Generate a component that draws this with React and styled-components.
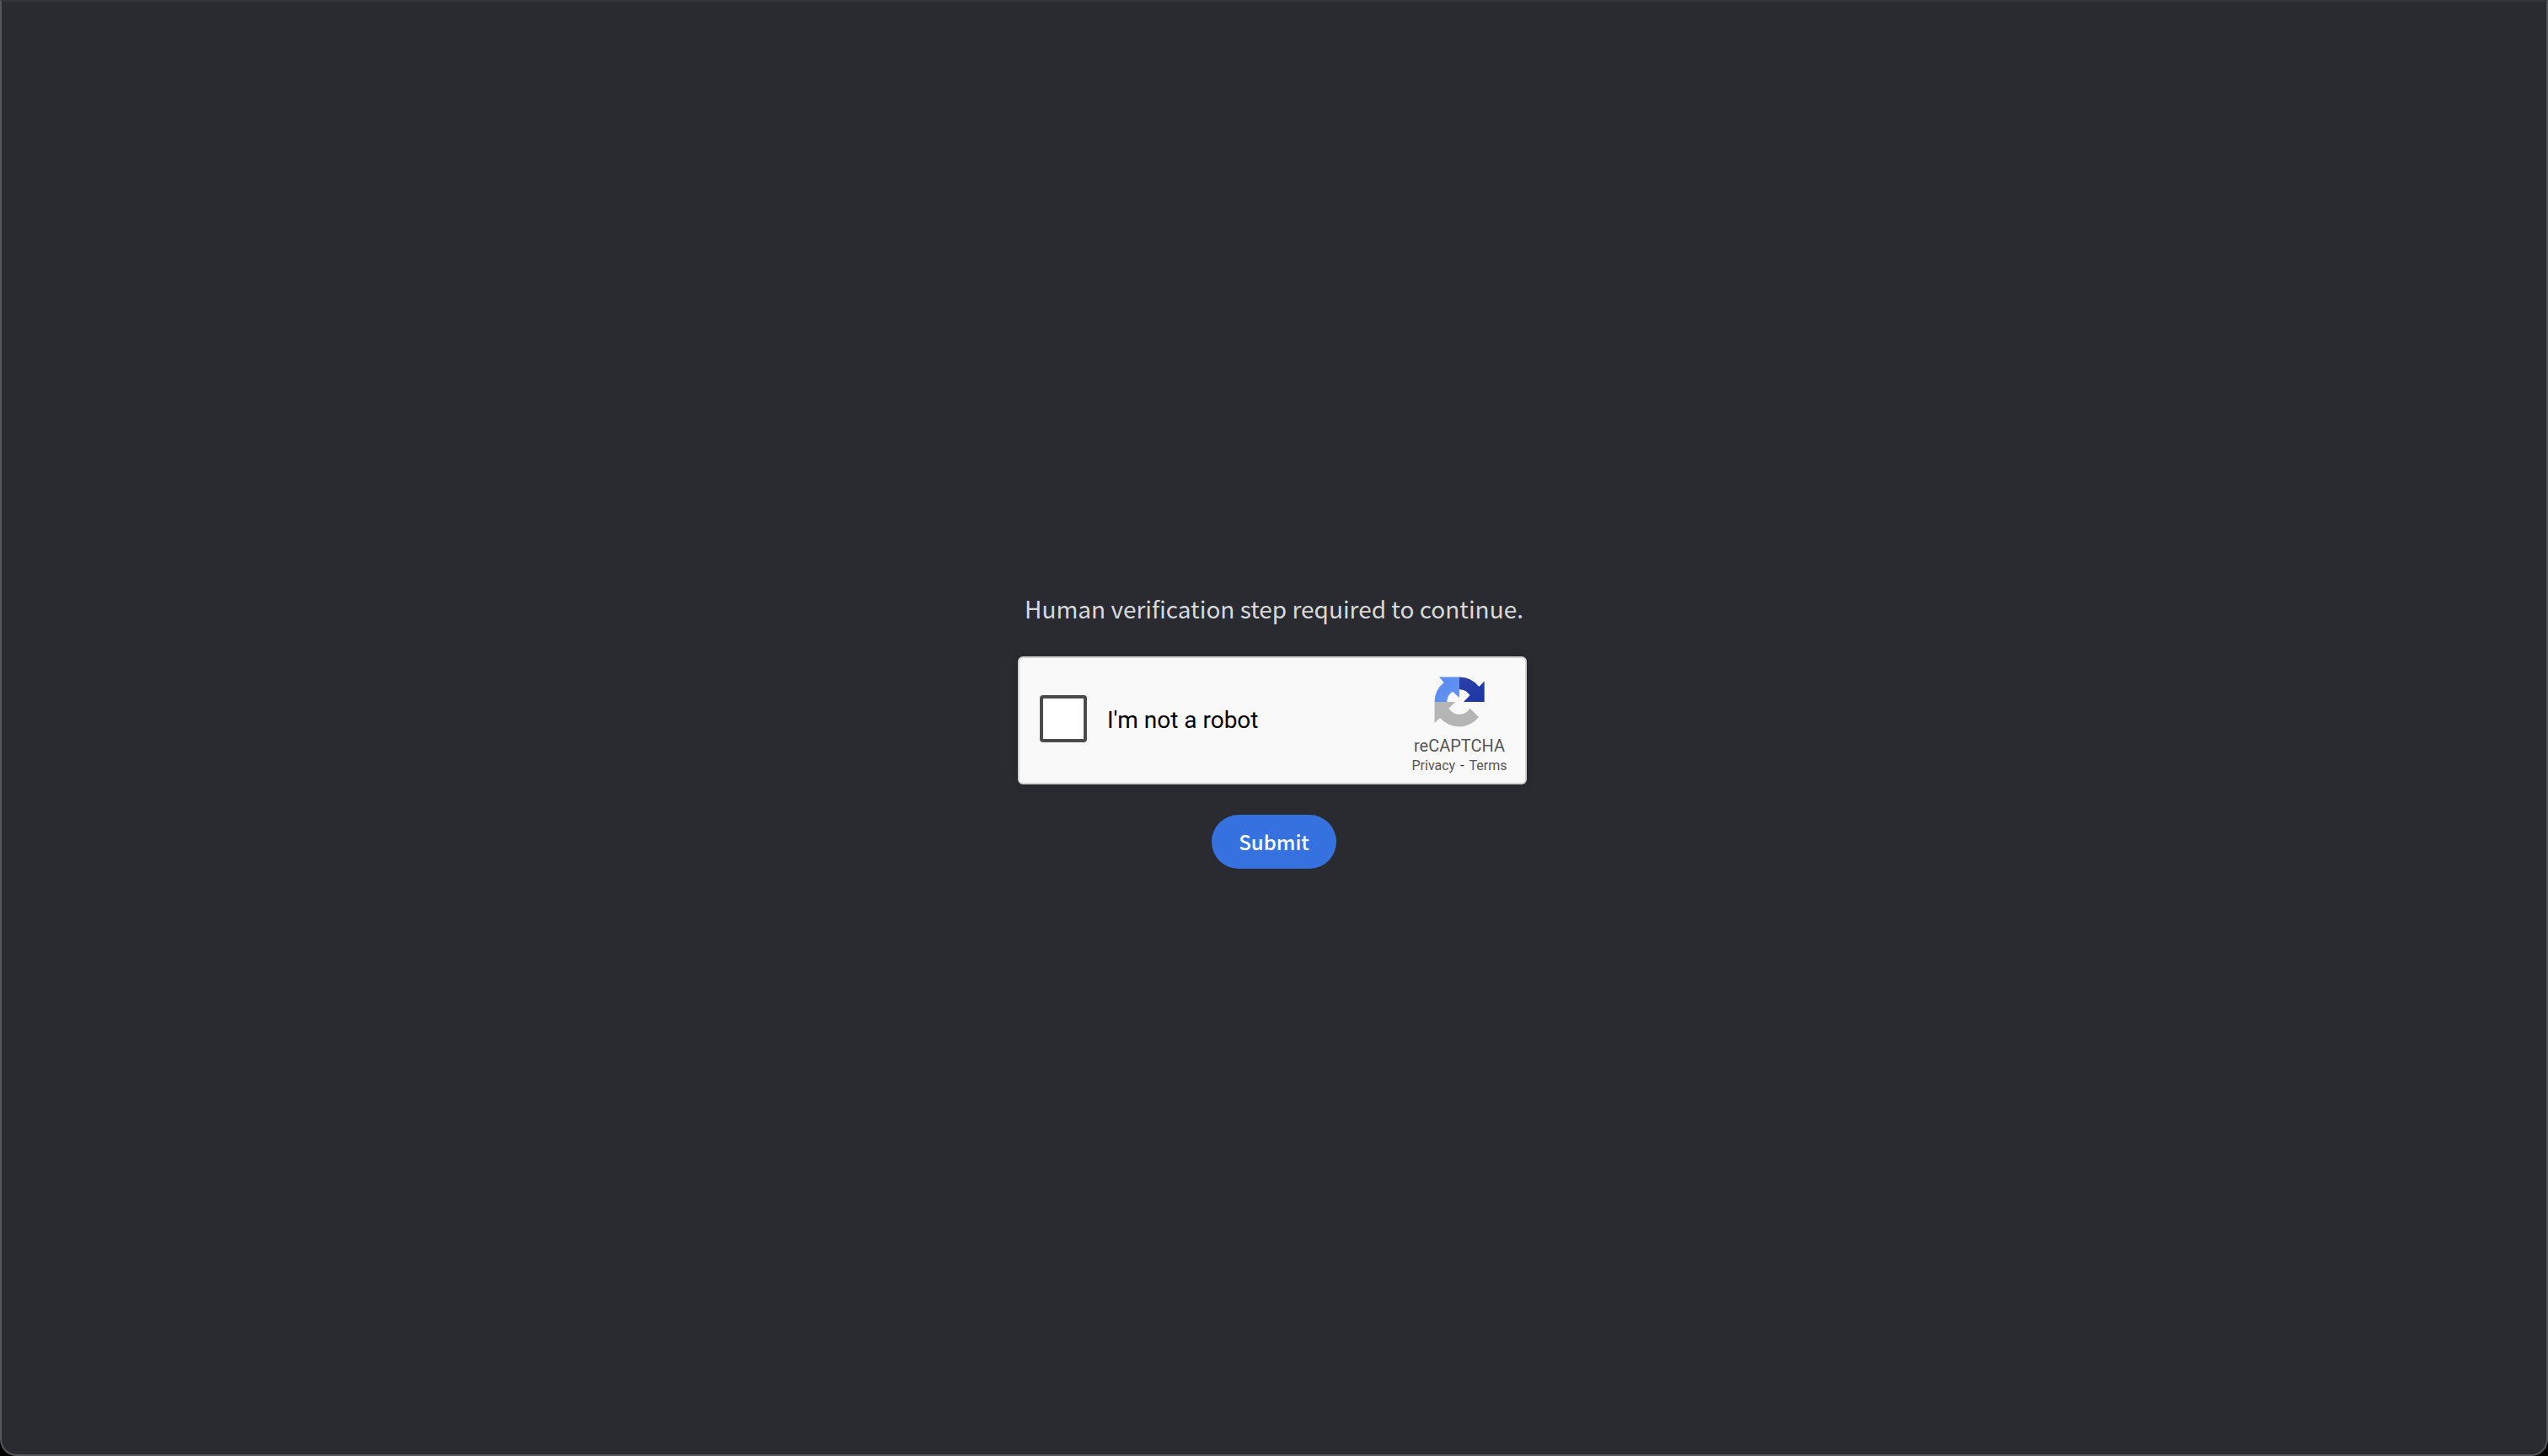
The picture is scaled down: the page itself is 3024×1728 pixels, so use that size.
import React from "react";
import styled, { createGlobalStyle } from "styled-components";

const GlobalStyle = createGlobalStyle`
  *, *::before, *::after { box-sizing: border-box; }
  body { margin: 0; background: #000; }
`;

const Page = styled.main`
  min-height: 100vh;
  display: flex;
  align-items: center;
  justify-content: center;
  background: #2a2b30;
  border: 2px solid #56575a;
  border-top-color: #343539;
  border-radius: 0 0 20px 20px;
  font-family: "Noto Sans CJK SC", "Noto Sans", sans-serif;
`;

const VerifyForm = styled.form`
  display: flex;
  flex-direction: column;
  align-items: center;
  gap: 32px;
`;

const Message = styled.h1`
  margin: 0;
  color: #d8d9dd;
  font-size: 28px;
  line-height: 50px;
  font-weight: 400;
`;

const CaptchaFrame = styled.div`
  padding: 0 4px 4px 0;
`;

const Captcha = styled.div`
  display: flex;
  justify-content: space-between;
  width: 604px;
  height: 152px;
  padding: 0 22px 0 24px;
  background: #f9f9f9;
  border: 2px solid #d3d3d3;
  border-radius: 6px;
  box-shadow: 0 0 8px 2px rgba(0, 0, 0, 0.08);
  font-family: Roboto, sans-serif;
`;

const RobotLabel = styled.label`
  display: flex;
  align-items: center;
  gap: 24px;
  color: #000;
  font-size: 28px;
  line-height: 34px;
`;

const RobotCheck = styled.input`
  appearance: none;
  width: 56px;
  height: 56px;
  margin: 0 0 4px;
  background: #fff;
  border: 4px solid #4a4c4b;
  border-radius: 4px;
`;

const Brand = styled.div`
  display: flex;
  flex-direction: column;
  align-items: center;
  width: 112px;
  padding-top: 20px;
  color: #555;
`;

const BrandName = styled.div`
  margin-top: 8px;
  font-size: 20px;
  line-height: 24px;
`;

const Links = styled.div`
  margin-top: 2px;
  display: flex;
  gap: 6px;
  font-size: 16px;
  line-height: 20px;
`;

const Dash = styled.span`
  color: #222;
`;

const FinePrint = styled.a`
  color: inherit;
  text-decoration: none;
`;

const Submit = styled.button`
  height: 64px;
  padding: 0 32px;
  border: 0;
  border-radius: 32px;
  background: #3572e0;
  color: #fff;
  font-family: inherit;
  font-size: 24px;
  line-height: 40px;
  font-weight: 500;
`;

const Logo = () => (
  <svg width="64" height="64" viewBox="-32 -32 64 64" aria-hidden="true">
    <defs>
      <linearGradient id="lightBlue" x1="0" y1="0" x2="1" y2="1">
        <stop offset="0" stopColor="#5a8dee" />
        <stop offset="1" stopColor="#6293f3" />
      </linearGradient>
      <linearGradient id="darkBlue" x1="0" y1="0" x2="1" y2="1">
        <stop offset="0" stopColor="#2c41a5" />
        <stop offset="1" stopColor="#1c34a8" />
      </linearGradient>
    </defs>
    <path
      fill="#b5b5b5"
      d="M-29.5 0H-5L-12.5 7.8A14.7 14.7 0 0 0 12.5 7.8L23 18A29.7 29.7 0 0 1-23 19L-29.5 25Z"
    />
    <path
      fill="url(#lightBlue)"
      d="M0-29.5H-24L-18.3-23A29.5 29.5 0 0 0-29.5 0H-14.7A14.7 14.7 0 0 1-8-12.3L0-5Z"
    />
    <path
      fill="url(#darkBlue)"
      d="M0-29.5A29.5 29.5 0 0 1 23.3-18L29.7-24.5V0H5L12.5-7.7A14.7 14.7 0 0 0 0-14.7Z"
    />
  </svg>
);

export default function App() {
  return (
    <>
      <GlobalStyle />
      <Page>
        <VerifyForm onSubmit={(event) => event.preventDefault()}>
          <Message>Human verification step required to continue.</Message>
          <CaptchaFrame>
            <Captcha>
              <RobotLabel htmlFor="robot">
                <RobotCheck id="robot" type="checkbox" />
                I'm not a robot
              </RobotLabel>
              <Brand>
                <Logo />
                <BrandName>reCAPTCHA</BrandName>
                <Links>
                  <FinePrint href="#privacy">Privacy</FinePrint>
                  <Dash>-</Dash>
                  <FinePrint href="#terms">Terms</FinePrint>
                </Links>
              </Brand>
            </Captcha>
          </CaptchaFrame>
          <Submit type="submit">Submit</Submit>
        </VerifyForm>
      </Page>
    </>
  );
}
